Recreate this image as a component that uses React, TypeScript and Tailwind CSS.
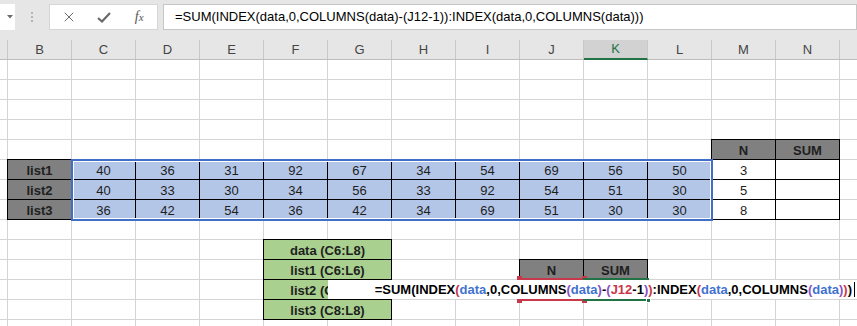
import { X } from "lucide-react";

const COLS = ["B", "C", "D", "E", "F", "G", "H", "I", "J", "K", "L", "M", "N"];

const lists: { name: string; values: number[]; n: number }[] = [
  { name: "list1", values: [40, 36, 31, 92, 67, 34, 54, 69, 56, 50], n: 3 },
  { name: "list2", values: [40, 33, 30, 34, 56, 33, 92, 54, 51, 30], n: 5 },
  { name: "list3", values: [36, 42, 54, 36, 42, 34, 69, 51, 30, 30], n: 8 },
];

const names = ["data (C6:L8)", "list1 (C6:L6)", "list2 (C7:L7)", "list3 (C8:L8)"];

const BLUE = "text-[#3f72d0]";
const RED = "text-[#c8374a]";
const PURPLE = "text-[#8c4fc4]";
const BLACK = "text-black";

const formula: [string, string][] = [
  ["=SUM(INDEX", BLACK],
  ["(", RED],
  ["data", BLUE],
  [",0,COLUMNS", BLACK],
  ["(", PURPLE],
  ["data", BLUE],
  [")", PURPLE],
  ["-", BLACK],
  ["(", PURPLE],
  ["J12", RED],
  ["-1", BLACK],
  [")", PURPLE],
  [")", RED],
  [":INDEX", BLACK],
  ["(", RED],
  ["data", BLUE],
  [",0,COLUMNS", BLACK],
  ["(", PURPLE],
  ["data", BLUE],
  [")", PURPLE],
  [")", RED],
  [")", BLACK],
];

const FORMULA_TEXT = formula.map((p) => p[0]).join("");

function Toolbar() {
  return (
    <div className="h-10 bg-[#e6e6e6] pt-1 flex items-start">
      {/* Name box stub */}
      <div className="w-[15px] h-[26px] bg-white flex items-center justify-end pr-[2px]">
        <svg width="6" height="4" viewBox="0 0 6 4">
          <polygon points="0,0 6,0 3,3.5" fill="#6d6d6d" />
        </svg>
      </div>
      <div className="w-[34px] h-[26px] flex flex-col items-center justify-center gap-[2px]">
        <span className="w-[2px] h-[2px] bg-[#b5b5b5]" />
        <span className="w-[2px] h-[2px] bg-[#b5b5b5]" />
        <span className="w-[2px] h-[2px] bg-[#b5b5b5]" />
      </div>
      {/* Cancel / enter / fx */}
      <div className="w-[109px] h-[26px] bg-white border border-[#d6d6d6] flex items-center">
        <div className="w-[36px] flex justify-center pl-[2px]">
          <X className="w-[16px] h-[16px] text-[#6a6a6a]" strokeWidth={1.5} />
        </div>
        <div className="w-[36px] flex justify-center">
          <svg width="14" height="11" viewBox="0 0 14 11">
            <path d="M1 6 L5 9.5 L13 1" fill="none" stroke="#6a6a6a" strokeWidth="2.2" />
          </svg>
        </div>
        <div className="w-[36px] flex justify-center">
          <span className="font-['Liberation_Serif',serif] italic text-[14px] text-[#555] leading-none">
            f<span className="text-[11px]">x</span>
          </span>
        </div>
      </div>
      {/* Formula bar */}
      <div className="ml-[5px] flex-1 h-[26px] bg-white border border-[#c6c6c6] pl-[11px] flex items-center text-[13px] text-black whitespace-nowrap">
        {FORMULA_TEXT}
      </div>
    </div>
  );
}

function HeaderRow() {
  return (
    <div className="flex h-5 bg-[#e6e6e6] border-b border-[#bdbdbd] text-[13px] text-[#444]">
      <div className="w-2 shrink-0 border-r border-[#c8c8c8]" />
      {COLS.map((c) =>
        c === "K" ? (
          <div
            key={c}
            className="w-16 shrink-0 border-r border-[#c8c8c8] bg-[#d2d2d2] border-b-2 border-b-[#217346] -mb-px flex items-center justify-center text-[#217346]"
          >
            {c}
          </div>
        ) : (
          <div key={c} className="w-16 shrink-0 border-r border-[#c8c8c8] flex items-center justify-center">
            {c}
          </div>
        )
      )}
      <div className="flex-1" />
    </div>
  );
}

function GridLines() {
  return (
    <div className="col-start-1 row-start-1 flex flex-col">
      {Array.from({ length: 14 }).map((_, r) => (
        <div key={r} className="flex h-5">
          <div className="w-2 shrink-0 border-r border-b border-[#d4d4d4]" />
          {COLS.map((c) => (
            <div key={c} className="w-16 shrink-0 border-r border-b border-[#d4d4d4]" />
          ))}
          <div className="flex-1 border-b border-[#d4d4d4]" />
        </div>
      ))}
    </div>
  );
}

function Handle({ className }: { className: string }) {
  return <span className={"absolute w-[5px] h-[5px] " + className} />;
}

function Overlay() {
  const cell = "flex items-end justify-center leading-4 border-r border-b border-black";
  return (
    <div className="col-start-1 row-start-1 grid grid-cols-[8px_repeat(13,64px)_1fr] grid-rows-[repeat(14,20px)] text-[13px] text-[#1e1e1e]">
      {/* list labels */}
      <div className="col-start-2 row-start-6 row-span-3 -ml-px -mt-px border-l border-t border-black grid grid-rows-[repeat(3,20px)]">
        {lists.map((l) => (
          <div key={l.name} className={cell + " bg-[#808080] font-bold"}>
            {l.name}
          </div>
        ))}
      </div>

      {/* data block */}
      <div className="col-start-3 col-span-10 row-start-6 row-span-3 -ml-px -mt-px border-l border-t border-[#1d2940] grid grid-cols-[repeat(10,64px)] grid-rows-[repeat(3,20px)]">
        {lists.map((l) =>
          l.values.map((v, i) => (
            <div key={l.name + i} className={cell + " border-[#1d2940] bg-[#b4c6e7]"}>
              {v}
            </div>
          ))
        )}
      </div>

      {/* N / SUM table */}
      <div className="col-start-13 col-span-2 row-start-5 row-span-4 -ml-px -mt-px border-l border-t border-black grid grid-cols-[64px_64px] grid-rows-[repeat(4,20px)] bg-white">
        <div className={cell + " bg-[#808080] font-bold"}>N</div>
        <div className={cell + " bg-[#808080] font-bold"}>SUM</div>
        {lists.map((l) => [
          <div key={l.name + "n"} className={cell}>
            {l.n}
          </div>,
          <div key={l.name + "s"} className={cell} />,
        ])}
      </div>

      {/* range highlight: data */}
      <div className="col-start-3 col-span-10 row-start-6 row-span-3 -m-px border-2 border-[#3f6fc6] shadow-[inset_0_0_0_1px_#ffffff]" />

      {/* named ranges */}
      <div className="col-start-6 col-span-2 row-start-10 row-span-4 -ml-px -mt-px border-l border-t border-black grid grid-rows-[repeat(4,20px)]">
        {names.map((n) => (
          <div key={n} className={cell + " bg-[#a9d08e] font-bold"}>
            {n}
          </div>
        ))}
      </div>

      {/* small N / SUM header */}
      <div className="col-start-10 col-span-2 row-start-11 -ml-px -mt-px border-l border-t border-black grid grid-cols-[64px_64px]">
        <div className={cell + " bg-[#808080] font-bold"}>N</div>
        <div className={cell + " bg-[#808080] font-bold"}>SUM</div>
      </div>

      {/* J12 reference highlight */}
      <div className="col-start-10 row-start-12 -mt-[2px] -ml-px -mr-px -mb-px border-2 border-[#c8374a] relative">
        <Handle className="bg-[#c8374a] -left-[4px] -top-[4px]" />
        <Handle className="bg-[#c8374a] -right-[4px] -top-[4px]" />
        <Handle className="bg-[#c8374a] -left-[4px] -bottom-[4px]" />
        <Handle className="bg-[#c8374a] -right-[4px] -bottom-[4px]" />
      </div>

      {/* active cell K12 */}
      <div className="col-start-11 row-start-12 -mt-[2px] -ml-px -mr-px -mb-px border-2 border-[#217346] relative">
        <Handle className="bg-[#217346] -right-[4px] -bottom-[4px] border border-white" />
      </div>

      {/* in-cell edit, drawn over the highlights */}
      <div className="relative col-start-7 col-end-16 row-start-12 mb-px bg-white flex items-center justify-end pr-[2px] font-bold whitespace-nowrap">
        <span>
          {formula.map(([t, c], i) => (
            <span key={i} className={c}>
              {t}
            </span>
          ))}
        </span>
        <span className="ml-[2px] w-px h-[15px] bg-black" />
      </div>
    </div>
  );
}

export default function App() {
  return (
    <div className="w-[857px] h-[326px] overflow-hidden bg-white font-['Liberation_Sans',Arial,sans-serif]">
      <Toolbar />
      <HeaderRow />
      <div className="grid">
        <GridLines />
        <Overlay />
      </div>
    </div>
  );
}
